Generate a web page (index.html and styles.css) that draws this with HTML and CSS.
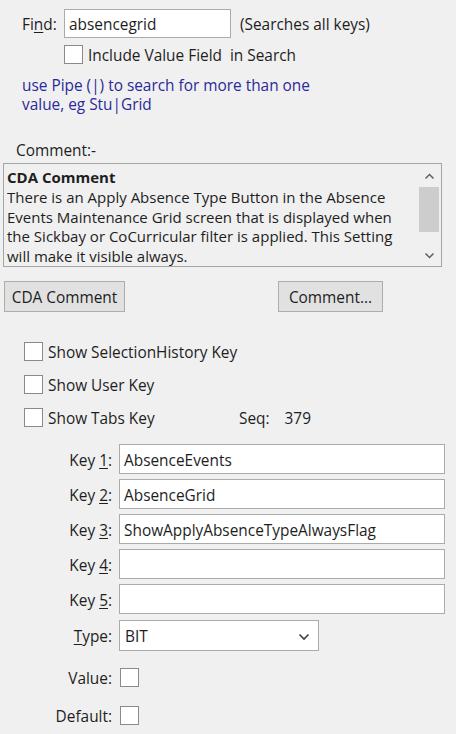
FILE: index.html
```html
<!DOCTYPE html>
<html>
<head>
<meta charset="utf-8">
<link rel="stylesheet" href="styles.css">
</head>
<body>
<div class="page">
  <div class="find-row">
    <span class="find-label">Fi<u>n</u>d:</span>
    <div class="input find-input">absencegrid</div>
    <span class="hint">(Searches all keys)</span>
  </div>
  <div class="include-row">
    <span class="cb"></span>
    <span class="cb-label">Include Value Field&nbsp; in Search</span>
  </div>
  <div class="pipe-note">use Pipe (|) to search for more than one<br>value, eg Stu|Grid</div>
  <div class="comment-label">Comment:-</div>
  <div class="comment-box">
    <div class="comment-text">
      <b>CDA Comment</b><br>
      There is an Apply Absence Type Button in the Absence<br>Events Maintenance Grid screen that is displayed when<br>the Sickbay or CoCurricular filter is applied. This Setting<br>will make it visible always.
    </div>
    <div class="scrollbar">
      <svg class="arrow" width="17" height="17" viewBox="0 0 17 17"><path d="M4.5 10.5 L8.5 6.5 L12.5 10.5" fill="none" stroke="#606060" stroke-width="1.5"/></svg>
      <div class="track"><div class="thumb"></div></div>
      <svg class="arrow" width="17" height="17" viewBox="0 0 17 17"><path d="M4.5 6.5 L8.5 10.5 L12.5 6.5" fill="none" stroke="#606060" stroke-width="1.5"/></svg>
    </div>
  </div>
  <div class="btn-row">
    <div class="btn btn-cda">CDA Comment</div>
    <div class="btn btn-comment">Comment...</div>
  </div>
  <div class="checks">
    <div class="check-row"><span class="cb"></span><span class="cb-label">Show SelectionHistory Key</span></div>
    <div class="check-row"><span class="cb"></span><span class="cb-label">Show User Key</span></div>
    <div class="check-row"><span class="cb"></span><span class="cb-label tabs-label">Show Tabs Key</span><span class="seq">Seq:</span><span class="seq seq-val">379</span></div>
  </div>
  <div class="keys">
    <span class="klabel">Key <u>1</u>:</span><div class="input">AbsenceEvents</div>
    <span class="klabel">Key <u>2</u>:</span><div class="input">AbsenceGrid</div>
    <span class="klabel">Key <u>3</u>:</span><div class="input">ShowApplyAbsenceTypeAlwaysFlag</div>
    <span class="klabel">Key <u>4</u>:</span><div class="input"></div>
    <span class="klabel">Key <u>5</u>:</span><div class="input"></div>
  </div>
  <div class="type-grid">
    <span class="klabel"><u>T</u>ype:</span>
    <div class="select"><span>BIT</span><svg width="12" height="8" viewBox="0 0 12 8"><path d="M1.5 1.5 L6 6 L10.5 1.5" fill="none" stroke="#404040" stroke-width="1.6"/></svg></div>
    <span class="klabel vlabel">Value:</span><div class="vcell"><span class="cb"></span></div>
    <span class="klabel vlabel">Default:</span><div class="vcell"><span class="cb"></span></div>
  </div>
</div>
</body>
</html>
```
FILE: styles.css
```css
html, body {
  margin: 0;
  padding: 0;
  background: #f0f0f0;
}
body {
  font-family: "Open Sans", "Noto Sans", sans-serif;
  font-size: 15.4px;
  color: #1e1e1e;
  width: 456px;
  height: 734px;
  overflow: hidden;
}
u { text-decoration-thickness: 1px; text-underline-offset: 2px; }
.page { display: flex; flex-direction: column; }
.find-row {
  display: flex;
  align-items: center;
  margin-top: 9px;
  height: 29px;
}
.find-label { padding: 2px 0 0 22px; box-sizing: border-box; width: 64px; }
.input {
  box-sizing: border-box;
  height: 30px;
  background: #ffffff;
  border: 1px solid #ababab;
  padding: 2px 4px 0;
  display: flex;
  align-items: center;
  white-space: nowrap;
  overflow: hidden;
}
.find-input { width: 167px; height: 29px; }
.hint { margin-left: 9px; padding-top: 2px; }
.include-row {
  display: flex;
  align-items: center;
  margin-top: 7px;
  margin-left: 64px;
  height: 19px;
}
.cb {
  display: inline-block;
  box-sizing: border-box;
  width: 19px;
  height: 19px;
  border: 1px solid #8a8a8a;
  background: #ffffff;
  flex: none;
}
.cb-label { margin-left: 5px; padding-top: 2px; }
.pipe-note {
  margin-top: 12px;
  margin-left: 22px;
  color: #2a2a9a;
  line-height: 19px;
}
.comment-label {
  margin-top: 27px;
  margin-left: 16px;
  line-height: 19px;
}
.comment-box {
  margin-top: 3px;
  margin-left: 3px;
  width: 439px;
  height: 104px;
  box-sizing: border-box;
  border: 1px solid #a5a5a5;
  display: flex;
  background: #f0f0f0;
}
.comment-text {
  flex: 1;
  padding: 4px 0 0 3px;
  font-size: 15px;
  line-height: 19.8px;
  white-space: nowrap;
  overflow: hidden;
}
.comment-text b { font-weight: 700; }
.scrollbar {
  width: 20px;
  display: flex;
  flex-direction: column;
  align-items: center;
  padding: 4px 0 2px;
  box-sizing: border-box;
  margin-right: 2px;
}
.arrow { flex: none; }
.track { flex: 1; width: 20px; padding-top: 2px; box-sizing: border-box; }
.thumb { width: 20px; height: 45px; background: #cdcdcd; }
.btn-row {
  display: flex;
  margin-top: 14px;
  margin-left: 4px;
  height: 31px;
}
.btn {
  box-sizing: border-box;
  height: 31px;
  background: #e1e1e1;
  border: 1px solid #adadad;
  display: flex;
  align-items: center;
  justify-content: center;
  padding-top: 2px;
}
.btn-cda { width: 121px; }
.btn-comment { width: 105px; margin-left: 153px; }
.checks {
  display: flex;
  flex-direction: column;
  gap: 14px;
  margin-top: 30px;
  margin-left: 24px;
}
.check-row { display: flex; align-items: center; height: 19px; }
.tabs-label { width: 191px; flex: none; }
.seq { padding-top: 2px; }
.seq-val { margin-left: 15px; }
.keys {
  display: grid;
  grid-template-columns: 112px 326px;
  column-gap: 7px;
  row-gap: 5px;
  margin-top: 17px;
  align-items: center;
}
.klabel { text-align: right; padding-top: 2px; }
.type-grid {
  display: grid;
  grid-template-columns: 112px 200px;
  column-gap: 7px;
  margin-top: 6px;
  align-items: center;
}
.select {
  box-sizing: border-box;
  height: 31px;
  background: #ffffff;
  border: 1px solid #ababab;
  display: flex;
  align-items: center;
  justify-content: space-between;
  padding: 2px 8px 0 5px;
}
.vcell { display: flex; align-items: center; height: 19px; padding-left: 1px; }
.type-grid > :nth-child(3), .type-grid > :nth-child(4) { margin-top: 15px; }
.type-grid > :nth-child(5), .type-grid > :nth-child(6) { margin-top: 15px; }
```
